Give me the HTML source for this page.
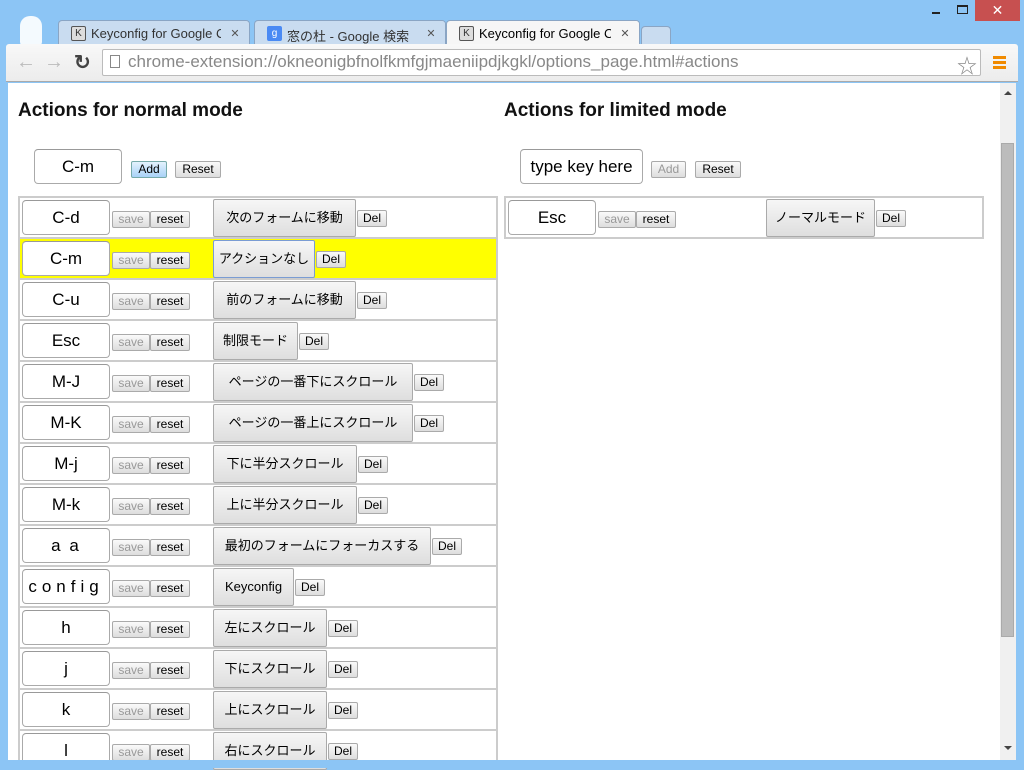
<!DOCTYPE html>
<html><head><meta charset="utf-8"><style>
*{box-sizing:border-box;margin:0;padding:0}
body{width:1024px;height:768px;overflow:hidden;background:#8cc5f5;position:relative;font-family:"Liberation Sans","Noto Sans CJK JP",sans-serif}
.a{position:absolute}
.tab{position:absolute;top:20px;height:26px;background:#c9dcf0;border:1px solid #8aa5c4;border-bottom:none;border-radius:4px 4px 0 0;font-size:13px;color:#333;padding:5px 0 0 32px;white-space:nowrap;overflow:hidden}
.tab .x{position:absolute;right:0;top:0;width:28px;height:25px;padding-top:6px;text-align:center;color:#555;font-size:11px;background:inherit}
.fav{position:absolute;left:12px;top:5px;width:15px;height:15px;border:1px solid #555;background:#ddd;border-radius:2px;font-size:10px;line-height:13px;text-align:center;padding:0;color:#333}
.inp{position:absolute;width:88px;height:35px;border:1px solid #aaa;border-top-color:#999;border-radius:4px;background:#fff;font-size:17px;text-align:center;line-height:33px;color:#000}
.b{position:absolute;height:17px;border:1px solid #aaa;border-radius:2px;background:linear-gradient(#fafafa,#ddd);font-size:12px;line-height:15px;text-align:center;color:#000}
.g{color:#999}
.act{position:absolute;height:38px;border:1px solid #aaa;border-radius:2px;background:linear-gradient(#f6f6f6,#dedede);font-size:13px;line-height:36px;text-align:center;color:#000;white-space:nowrap}
.sep{position:absolute;left:18px;width:480px;height:2px;background:#ccc}
h2{position:absolute;font-size:19px;font-weight:bold;color:#111}
</style></head><body>
<!-- title bar -->
<div class="a" style="left:20px;top:16px;width:22px;height:30px;background:#fff;border-radius:10px 10px 4px 4px;opacity:.9"></div>
<div class="a" style="left:932px;top:12px;width:8px;height:2px;background:#222"></div>
<div class="a" style="left:957px;top:5px;width:11px;height:9px;border:1px solid #222;border-top:2px solid #222"></div>
<div class="a" style="left:975px;top:0;width:45px;height:21px;background:#c75050;color:#fff;text-align:center;font-size:14px;line-height:21px">✕</div>
<div class="tab" style="left:58px;width:192px"><span class="fav">K</span>Keyconfig for Google Ch<span class="x">✕</span></div>
<div class="tab" style="left:254px;width:192px"><span class="fav" style="background:#4a8af4;color:#fff;border-color:#4a8af4">g</span>窓の杜 - Google 検索<span class="x">✕</span></div>
<div class="tab" style="left:446px;width:194px;background:#f6f6f6;color:#000"><span class="fav">K</span>Keyconfig for Google Ch<span class="x">✕</span></div>
<div class="tab" style="left:641px;width:30px;top:26px;height:20px;padding:0"></div>
<!-- toolbar -->
<div class="a" style="left:6px;top:44px;width:1012px;height:38px;background:linear-gradient(#f8f8f8,#ececec);border-radius:3px 3px 0 0;border-bottom:1px solid #aaa"></div>
<div class="a" style="left:16px;top:51px;font-size:20px;color:#bbb">←</div>
<div class="a" style="left:44px;top:51px;font-size:20px;color:#bbb">→</div>
<div class="a" style="left:74px;top:50px;font-size:20px;color:#444;font-weight:bold">↻</div>
<div class="a" style="left:102px;top:49px;width:879px;height:27px;background:#fff;border:1px solid #bbb;border-radius:2px"></div>
<div class="a" style="left:110px;top:55px;width:10px;height:13px;border:1px solid #888"></div>
<div class="a" style="left:128px;top:52px;font-size:17px;color:#888;white-space:nowrap">chrome-extension://okneonigbfnolfkmfgjmaeniipdjkgkl/options_page.html#actions</div>
<div class="a" style="left:957px;top:50px;font-size:20px;color:#888">☆</div>
<div class="a" style="left:993px;top:56px;width:13px;height:3px;background:#f08a00;box-shadow:0 5px 0 #f08a00,0 10px 0 #f08a00"></div>
<!-- content -->
<div class="a" style="left:8px;top:83px;width:1008px;height:677px;background:#fff"></div>
<div class="a" style="left:1000px;top:83px;width:16px;height:677px;background:#f0f0f0"></div>
<div class="a" style="left:1001px;top:143px;width:13px;height:494px;background:#bcbcbc;border:1px solid #aaa"></div>
<div class="a" style="left:1004px;top:87px;border:4px solid transparent;border-bottom:4px solid #444"></div>
<div class="a" style="left:1004px;top:746px;border:4px solid transparent;border-top:4px solid #444"></div>

<h2 style="left:18px;top:100px">Actions for normal mode</h2>
<h2 style="left:504px;top:100px">Actions for limited mode</h2>

<div class="inp" style="left:34px;top:149px;height:35px">C-m</div>
<div class="b" style="left:131px;top:161px;width:36px;background:linear-gradient(#e4f2fd,#a9d2f7);border-color:#7aa">Add</div>
<div class="b" style="left:175px;top:161px;width:46px">Reset</div>
<div class="inp" style="left:520px;top:149px;width:123px;font-size:17px">type key here</div>
<div class="b g" style="left:651px;top:161px;width:35px">Add</div>
<div class="b" style="left:695px;top:161px;width:46px">Reset</div>

<!-- left table -->
<div class="a" style="left:18px;top:196px;width:480px;height:570px;border:2px solid #ccc;border-bottom:none"></div>
<div class="a" style="left:20px;top:239px;width:476px;height:39px;background:#ff0"></div>
<div class="sep" style="top:237px"></div><div class="sep" style="top:278px"></div><div class="sep" style="top:319px"></div><div class="sep" style="top:360px"></div><div class="sep" style="top:401px"></div><div class="sep" style="top:442px"></div><div class="sep" style="top:483px"></div><div class="sep" style="top:524px"></div><div class="sep" style="top:565px"></div><div class="sep" style="top:606px"></div><div class="sep" style="top:647px"></div><div class="sep" style="top:688px"></div><div class="sep" style="top:729px"></div>

<div class="inp" style="left:22px;top:200px">C-d</div><div class="b g" style="left:112px;top:211px;width:38px">save</div><div class="b" style="left:150px;top:211px;width:40px">reset</div><div class="act" style="left:213px;top:199px;width:143px">次のフォームに移動</div><div class="b" style="left:357px;top:210px;width:30px">Del</div>
<div class="inp" style="left:22px;top:241px">C-m</div><div class="b g" style="left:112px;top:252px;width:38px">save</div><div class="b" style="left:150px;top:252px;width:40px">reset</div><div class="act" style="left:213px;top:240px;width:102px;border-color:#7a9cd3">アクションなし</div><div class="b" style="left:316px;top:251px;width:30px">Del</div>
<div class="inp" style="left:22px;top:282px">C-u</div><div class="b g" style="left:112px;top:293px;width:38px">save</div><div class="b" style="left:150px;top:293px;width:40px">reset</div><div class="act" style="left:213px;top:281px;width:143px">前のフォームに移動</div><div class="b" style="left:357px;top:292px;width:30px">Del</div>
<div class="inp" style="left:22px;top:323px">Esc</div><div class="b g" style="left:112px;top:334px;width:38px">save</div><div class="b" style="left:150px;top:334px;width:40px">reset</div><div class="act" style="left:213px;top:322px;width:85px">制限モード</div><div class="b" style="left:299px;top:333px;width:30px">Del</div>
<div class="inp" style="left:22px;top:364px">M-J</div><div class="b g" style="left:112px;top:375px;width:38px">save</div><div class="b" style="left:150px;top:375px;width:40px">reset</div><div class="act" style="left:213px;top:363px;width:200px">ページの一番下にスクロール</div><div class="b" style="left:414px;top:374px;width:30px">Del</div>
<div class="inp" style="left:22px;top:405px">M-K</div><div class="b g" style="left:112px;top:416px;width:38px">save</div><div class="b" style="left:150px;top:416px;width:40px">reset</div><div class="act" style="left:213px;top:404px;width:200px">ページの一番上にスクロール</div><div class="b" style="left:414px;top:415px;width:30px">Del</div>
<div class="inp" style="left:22px;top:446px">M-j</div><div class="b g" style="left:112px;top:457px;width:38px">save</div><div class="b" style="left:150px;top:457px;width:40px">reset</div><div class="act" style="left:213px;top:445px;width:144px">下に半分スクロール</div><div class="b" style="left:358px;top:456px;width:30px">Del</div>
<div class="inp" style="left:22px;top:487px">M-k</div><div class="b g" style="left:112px;top:498px;width:38px">save</div><div class="b" style="left:150px;top:498px;width:40px">reset</div><div class="act" style="left:213px;top:486px;width:144px">上に半分スクロール</div><div class="b" style="left:358px;top:497px;width:30px">Del</div>
<div class="inp" style="left:22px;top:528px;letter-spacing:2px">a a</div><div class="b g" style="left:112px;top:539px;width:38px">save</div><div class="b" style="left:150px;top:539px;width:40px">reset</div><div class="act" style="left:213px;top:527px;width:218px">最初のフォームにフォーカスする</div><div class="b" style="left:432px;top:538px;width:30px">Del</div>
<div class="inp" style="left:22px;top:569px;letter-spacing:5px">config</div><div class="b g" style="left:112px;top:580px;width:38px">save</div><div class="b" style="left:150px;top:580px;width:40px">reset</div><div class="act" style="left:213px;top:568px;width:81px">Keyconfig</div><div class="b" style="left:295px;top:579px;width:30px">Del</div>
<div class="inp" style="left:22px;top:610px">h</div><div class="b g" style="left:112px;top:621px;width:38px">save</div><div class="b" style="left:150px;top:621px;width:40px">reset</div><div class="act" style="left:213px;top:609px;width:114px">左にスクロール</div><div class="b" style="left:328px;top:620px;width:30px">Del</div>
<div class="inp" style="left:22px;top:651px">j</div><div class="b g" style="left:112px;top:662px;width:38px">save</div><div class="b" style="left:150px;top:662px;width:40px">reset</div><div class="act" style="left:213px;top:650px;width:114px">下にスクロール</div><div class="b" style="left:328px;top:661px;width:30px">Del</div>
<div class="inp" style="left:22px;top:692px">k</div><div class="b g" style="left:112px;top:703px;width:38px">save</div><div class="b" style="left:150px;top:703px;width:40px">reset</div><div class="act" style="left:213px;top:691px;width:114px">上にスクロール</div><div class="b" style="left:328px;top:702px;width:30px">Del</div>
<div class="inp" style="left:22px;top:733px">l</div><div class="b g" style="left:112px;top:744px;width:38px">save</div><div class="b" style="left:150px;top:744px;width:40px">reset</div><div class="act" style="left:213px;top:732px;width:114px">右にスクロール</div><div class="b" style="left:328px;top:743px;width:30px">Del</div>

<!-- right table -->
<div class="a" style="left:504px;top:196px;width:480px;height:43px;border:2px solid #ccc"></div>
<div class="inp" style="left:508px;top:200px">Esc</div><div class="b g" style="left:598px;top:211px;width:38px">save</div><div class="b" style="left:636px;top:211px;width:40px">reset</div><div class="act" style="left:766px;top:199px;width:109px">ノーマルモード</div><div class="b" style="left:876px;top:210px;width:30px">Del</div>

<!-- bottom frame -->
<div class="a" style="left:0;top:760px;width:1024px;height:8px;background:#8cc5f5;z-index:10"></div>
</body></html>
